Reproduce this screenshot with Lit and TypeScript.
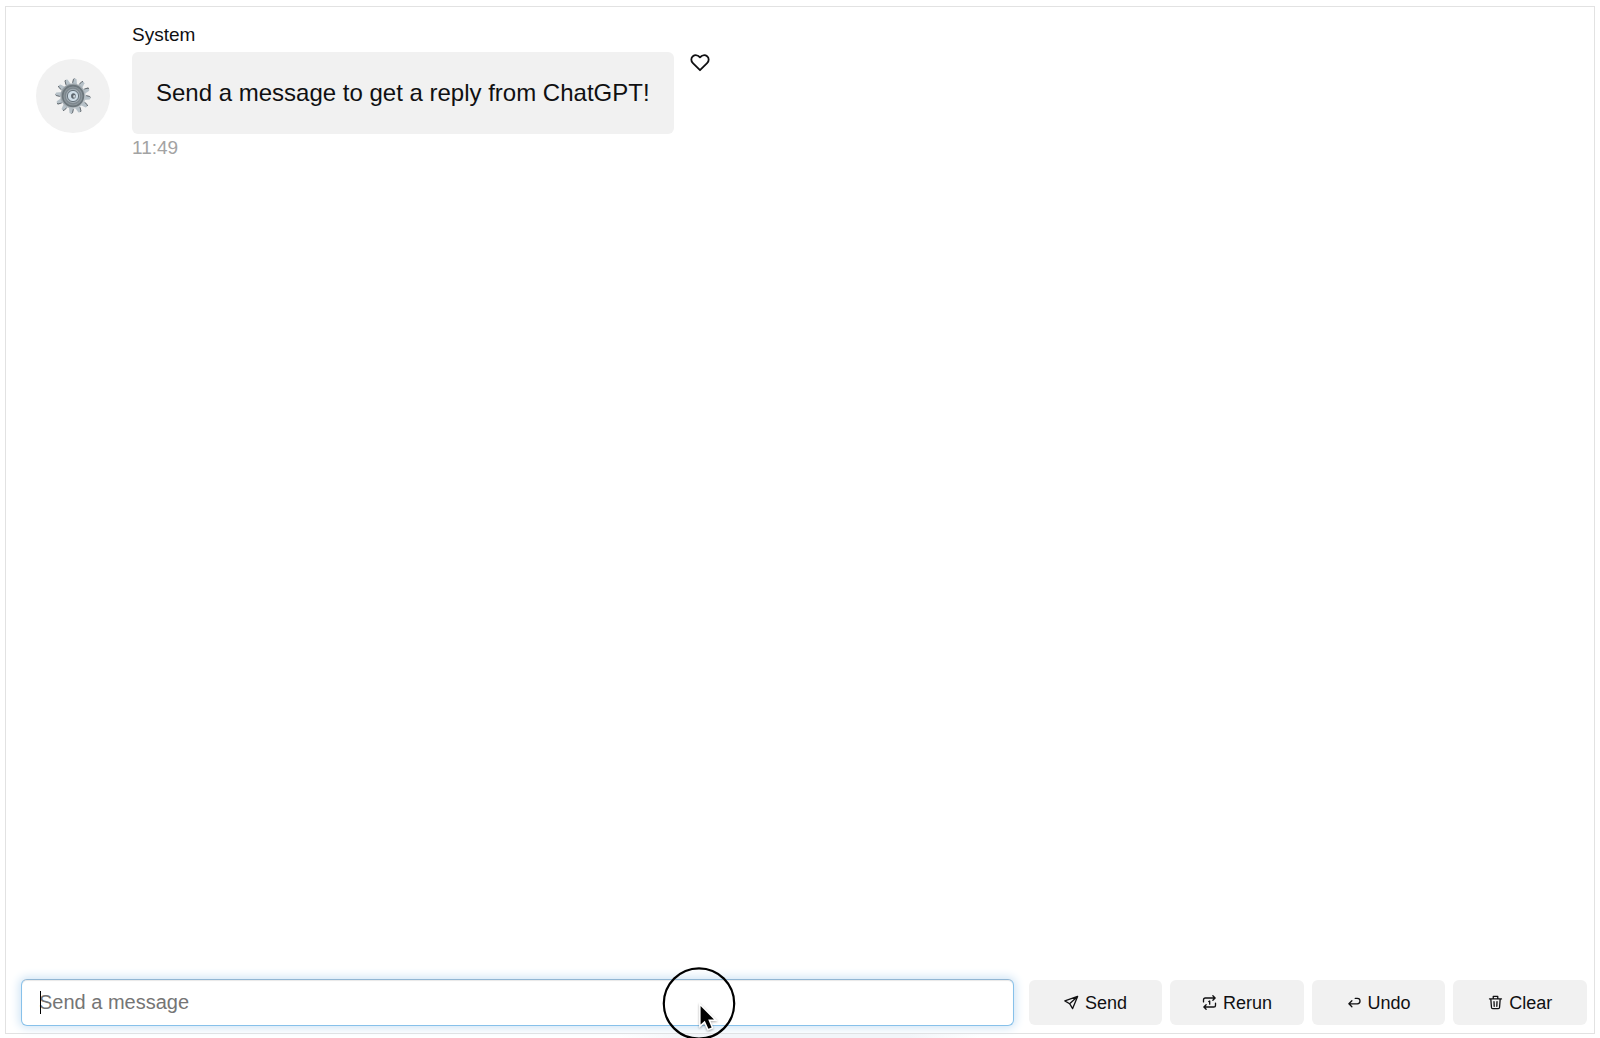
import { LitElement, html, css, svg } from "lit";
import { customElement, property, state } from "lit/decorators.js";

const cogTeeth = Array.from({ length: 12 }, (_, i) => i * 30 + 8);

const gear = html`
  <svg class="gear" viewBox="0 0 36 36" aria-hidden="true">
    <defs>
      <linearGradient id="metal" x1="0" y1="0" x2="1" y2="1">
        <stop offset="0" stop-color="#8b9399" />
        <stop offset="1" stop-color="#c3cbd0" />
      </linearGradient>
    </defs>
    ${cogTeeth.map(
      (a) => svg`<g transform="rotate(${a} 18 18)">
        <path d="M15.4 7 16.2 1.2 Q17.6 -.4 19.2 1 L20.6 7Z" fill="#b6c1c8" />
        <path d="M15.8 5 16.1 1.4 17 .5" fill="none" stroke="#596066" stroke-width=".9" />
      </g>`
    )}
    <circle cx="18" cy="18" r="12.6" fill="url(#metal)" />
    <circle cx="18" cy="18" r="10.4" fill="#8c969c" stroke="#6c767c" stroke-width="1.6" />
    <circle cx="18" cy="18" r="7.8" fill="#a0aab1" stroke="#7d878e" stroke-width="1.2" />
    <circle cx="18" cy="18" r="5.6" fill="#cfdde7" stroke="#66727b" stroke-width="1" />
    <ellipse cx="18.4" cy="18" rx="2.3" ry="2.8" fill="#5d666e" />
    <ellipse cx="19.2" cy="18.4" rx="1" ry="1.3" fill="#cdd5da" />
  </svg>
`;

const icons = {
  send: svg`<path d="M14.5 1.5 .9 6.3 6 9.3 9.2 14.5ZM6 9.3 14.5 1.5" />`,
  rerun: svg`<path d="M1.6 7.4V5.2Q1.6 3.2 3.6 3.2H13.6M11.6 .8 14 3.2 11.6 5.6M14.4 8.6V10.8Q14.4 12.8 12.4 12.8H2.4M4.4 10.4 2 12.8 4.4 15.2M7.2 6.9 8.2 6.4V9.8" />`,
  undo: svg`<path d="M5.2 6.2 2 9.4 5.2 12.6M2.2 9.4H11A2.9 2.9 0 0 0 11 3.6H8.8" />`,
  clear: svg`<path d="M1.6 4.2H14.4M3 4.2 3.7 13.4Q3.8 14.6 5 14.6H11Q12.2 14.6 12.3 13.4L13 4.2M5.6 4V1.5H10.4V4M6.4 7 6.6 12M9.6 7 9.4 12" />`,
};

type IconName = keyof typeof icons;

@customElement("action-button")
class ActionButton extends LitElement {
  @property() icon: IconName = "send";
  @property() label = "";

  static styles = css`
    :host {
      display: flex;
      min-width: 0;
    }
    .action {
      flex: 1;
      display: flex;
      align-items: center;
      justify-content: center;
      gap: 6px;
      min-width: 0;
      padding: 0;
      border: 0;
      border-radius: 6px;
      background: #f1f1f1;
      color: #101012;
      font: 18px/24px "Liberation Sans", Arial, sans-serif;
      cursor: pointer;
    }
    .action:hover {
      background: #e8e8e8;
    }
    .icon {
      width: 15px;
      height: 15px;
      fill: none;
      stroke: currentColor;
      stroke-width: 1.4;
      stroke-linecap: round;
      stroke-linejoin: round;
    }
  `;

  render() {
    return html`
      <button class="action" type="button">
        <svg class="icon" viewBox="0 0 16 16" aria-hidden="true">${icons[this.icon]}</svg>
        <span>${this.label}</span>
      </button>
    `;
  }
}

@customElement("chat-message")
class ChatMessage extends LitElement {
  @property() author = "";
  @property() text = "";
  @property() time = "";

  static styles = css`
    :host {
      display: flex;
      align-items: center;
      gap: 22px;
    }
    .avatar {
      flex: none;
      display: grid;
      place-items: center;
      width: 74px;
      height: 74px;
      margin-top: 8px;
      border-radius: 50%;
      background: #f1f1f1;
    }
    .gear {
      width: 36px;
      height: 36px;
    }
    .body {
      display: grid;
      grid-template-columns: auto auto;
      column-gap: 16px;
      font-size: 19px;
      line-height: 28px;
      color: #101012;
    }
    .author,
    .time {
      grid-column: 1 / -1;
    }
    .author {
      margin-bottom: 3px;
    }
    .time {
      color: #a3a3a3;
    }
    .bubble {
      margin: 0;
      padding: 24px 24px 25px;
      border-radius: 6px;
      background: #f1f1f1;
      font-size: 24px;
      line-height: 33px;
    }
    .like {
      align-self: start;
      display: flex;
      padding: 0;
      border: 0;
      background: none;
      color: #101012;
      cursor: pointer;
    }
    .heart {
      width: 20px;
      height: 20px;
      fill: none;
      stroke: currentColor;
      stroke-width: 1.8;
      stroke-linejoin: round;
    }
  `;

  render() {
    return html`
      <div class="avatar">${gear}</div>
      <div class="body">
        <span class="author">${this.author}</span>
        <p class="bubble">${this.text}</p>
        <button class="like" type="button" aria-label="Like">
          <svg class="heart" viewBox="0 0 20 20" aria-hidden="true">
            <path d="M10 18.2 2.9 11.1C.7 8.9 .9 5.8 2.9 4.2 5 2.6 8 3 10 5.4 12 3 15 2.6 17.1 4.2 19.1 5.8 19.3 8.9 17.1 11.1Z" />
          </svg>
        </button>
        <time class="time">${this.time}</time>
      </div>
    `;
  }
}

@customElement("app-root")
class AppRoot extends LitElement {
  @state() private draft = "";

  static styles = css`
    :host {
      display: block;
      position: relative;
      box-sizing: border-box;
      height: 100vh;
      padding: 6px 5px 4px;
      overflow: hidden;
      background: #fff;
      font-family: "Liberation Sans", Arial, sans-serif;
    }
    .card {
      display: flex;
      flex-direction: column;
      box-sizing: border-box;
      height: 100%;
      border: 1px solid #e2e2e2;
    }
    .feed {
      flex: 1;
      min-height: 0;
      padding: 14px 30px;
    }
    .composer {
      display: grid;
      grid-template-columns: minmax(0, 16fr) minmax(0, 9fr);
      gap: 15px;
      padding: 0 7px 7px 15px;
    }
    .field {
      position: relative;
      display: flex;
    }
    .input {
      flex: 1;
      min-width: 0;
      box-sizing: border-box;
      height: 47px;
      padding: 0 17px;
      border: 1px solid #87c1ea;
      border-top-color: #92b6d3;
      border-radius: 6px;
      outline: 0;
      background: #fff;
      box-shadow: 0 0 10px 2px #cfe4f5, inset 0 1px 1px #e8e8e8;
      color: #101012;
      font: 20px/24px "Liberation Sans", Arial, sans-serif;
    }
    .input::placeholder {
      color: #757575;
      opacity: 1;
    }
    .caret {
      position: absolute;
      left: 19px;
      top: 12px;
      width: 1px;
      height: 23px;
      background: #000;
    }
    .actions {
      display: grid;
      grid-template-columns: repeat(4, minmax(0, 1fr));
      gap: 8px;
      padding: 1px 0;
    }
    .pointer {
      position: absolute;
      left: 662px;
      top: 966px;
      width: 74px;
      height: 74px;
      pointer-events: none;
    }
    .arrow {
      fill: #000;
      stroke: #fff;
      stroke-width: 3;
      paint-order: stroke;
      filter: drop-shadow(0 1px 1px #0005);
    }
    .glow {
      position: absolute;
      left: 620px;
      bottom: 0;
      width: 360px;
      height: 4px;
      background: linear-gradient(90deg, transparent, #f2f5f9 20%, #f2f5f9 80%, transparent);
    }
  `;

  render() {
    return html`
      <main class="card">
        <section class="feed">
          <chat-message
            author="System"
            text="Send a message to get a reply from ChatGPT!"
            time="11:49"
          ></chat-message>
        </section>
        <form class="composer" @submit=${(e: Event) => e.preventDefault()}>
          <div class="field">
            <input
              class="input"
              type="text"
              aria-label="Send a message"
              placeholder="Send a message"
              .value=${this.draft}
              @input=${(e: Event) => (this.draft = (e.target as HTMLInputElement).value)}
            />
            ${this.draft ? "" : html`<span class="caret"></span>`}
          </div>
          <div class="actions">
            <action-button icon="send" label="Send"></action-button>
            <action-button icon="rerun" label="Rerun"></action-button>
            <action-button icon="undo" label="Undo"></action-button>
            <action-button icon="clear" label="Clear"></action-button>
          </div>
        </form>
      </main>
      <div class="glow"></div>
      <svg class="pointer" viewBox="0 0 74 74" aria-hidden="true">
        <circle cx="37" cy="37.5" r="35.2" fill="none" stroke="#000" stroke-width="2.2" />
        <path class="arrow" d="M38.6 40V58.6L42.8 54.8 46.4 62.8 49.6 61.4 46.2 53.4H52Z" />
      </svg>
    `;
  }
}
